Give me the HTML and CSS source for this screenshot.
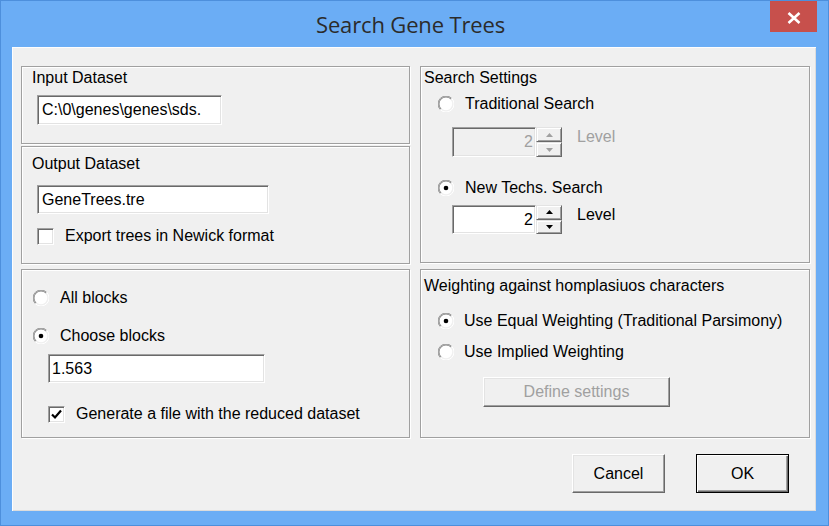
FILE: index.html
```html
<!DOCTYPE html>
<html>
<head>
<meta charset="utf-8">
<title>Search Gene Trees</title>
<link rel="stylesheet" href="styles.css">
</head>
<body>
<div class="window">
  <div class="titlebar">
    <span class="title">Search Gene Trees</span>
    <div class="close"><svg width="14" height="12" viewBox="0 0 14 12"><path d="M1.5 1 L12.5 11 M12.5 1 L1.5 11" stroke="#fff" stroke-width="2.6" fill="none"/></svg></div>
  </div>
  <div class="client">
    <div class="groups">
      <div class="col">
        <div class="group g-input">
          <div class="gtitle">Input Dataset</div>
          <div class="field f-input">C:\0\genes\genes\sds.</div>
        </div>
        <div class="group g-output">
          <div class="gtitle">Output Dataset</div>
          <div class="field f-output">GeneTrees.tre</div>
          <div class="check-row cr-export">
            <span class="checkbox"></span>
            <span class="label">Export trees in Newick format</span>
          </div>
        </div>
        <div class="group g-blocks">
          <div class="radio-row rr-all">
            <svg class="radio" width="16" height="16" viewBox="0 0 16 16"><path d="M2.3 13.7 A7.5 7.5 0 0 1 13.7 2.3" stroke="#a0a0a0" fill="none"/><path d="M13.7 2.3 A7.5 7.5 0 0 1 2.3 13.7" stroke="#fff" fill="none"/><circle cx="8" cy="8" r="6.2" fill="#fff"/><path d="M3 13 A6.5 6.5 0 0 1 13 3" stroke="#696969" stroke-width="0.8" fill="none"/></svg>
            <span class="label">All blocks</span>
          </div>
          <div class="radio-row rr-choose">
            <svg class="radio" width="16" height="16" viewBox="0 0 16 16"><path d="M2.3 13.7 A7.5 7.5 0 0 1 13.7 2.3" stroke="#a0a0a0" fill="none"/><path d="M13.7 2.3 A7.5 7.5 0 0 1 2.3 13.7" stroke="#fff" fill="none"/><circle cx="8" cy="8" r="6.2" fill="#fff"/><path d="M3 13 A6.5 6.5 0 0 1 13 3" stroke="#696969" stroke-width="0.8" fill="none"/><circle cx="8" cy="8" r="2.3" fill="#000"/></svg>
            <span class="label">Choose blocks</span>
          </div>
          <div class="field f-blocks">1.563</div>
          <div class="check-row cr-generate">
            <span class="checkbox"><svg width="13" height="13" viewBox="0 0 13 13"><path d="M2 6.5 L5 9.5 L11 2.5" stroke="#000" stroke-width="2.2" fill="none"/></svg></span>
            <span class="label">Generate a file with the reduced dataset</span>
          </div>
        </div>
      </div>
      <div class="col">
        <div class="group g-search">
          <div class="gtitle">Search Settings</div>
          <div class="radio-row rr-trad">
            <svg class="radio" width="16" height="16" viewBox="0 0 16 16"><path d="M2.3 13.7 A7.5 7.5 0 0 1 13.7 2.3" stroke="#a0a0a0" fill="none"/><path d="M13.7 2.3 A7.5 7.5 0 0 1 2.3 13.7" stroke="#fff" fill="none"/><circle cx="8" cy="8" r="6.2" fill="#fff"/><path d="M3 13 A6.5 6.5 0 0 1 13 3" stroke="#696969" stroke-width="0.8" fill="none"/></svg>
            <span class="label">Traditional Search</span>
          </div>
          <div class="spin-row sr-trad disabled">
            <div class="field spin-field">2</div>
            <div class="spin">
              <div class="spin-btn"><svg width="7" height="4" viewBox="0 0 7 4"><path d="M3.5 0 L7 4 L0 4 Z" fill="#a0a0a0"/></svg></div>
              <div class="spin-btn"><svg width="7" height="4" viewBox="0 0 7 4"><path d="M0 0 L7 0 L3.5 4 Z" fill="#a0a0a0"/></svg></div>
            </div>
            <span class="level">Level</span>
          </div>
          <div class="radio-row rr-new">
            <svg class="radio" width="16" height="16" viewBox="0 0 16 16"><path d="M2.3 13.7 A7.5 7.5 0 0 1 13.7 2.3" stroke="#a0a0a0" fill="none"/><path d="M13.7 2.3 A7.5 7.5 0 0 1 2.3 13.7" stroke="#fff" fill="none"/><circle cx="8" cy="8" r="6.2" fill="#fff"/><path d="M3 13 A6.5 6.5 0 0 1 13 3" stroke="#696969" stroke-width="0.8" fill="none"/><circle cx="8" cy="8" r="2.3" fill="#000"/></svg>
            <span class="label">New Techs. Search</span>
          </div>
          <div class="spin-row sr-new">
            <div class="field spin-field">2</div>
            <div class="spin">
              <div class="spin-btn"><svg width="7" height="4" viewBox="0 0 7 4"><path d="M3.5 0 L7 4 L0 4 Z" fill="#000"/></svg></div>
              <div class="spin-btn"><svg width="7" height="4" viewBox="0 0 7 4"><path d="M0 0 L7 0 L3.5 4 Z" fill="#000"/></svg></div>
            </div>
            <span class="level">Level</span>
          </div>
        </div>
        <div class="group g-weight">
          <div class="gtitle">Weighting against homplasiuos characters</div>
          <div class="radio-row rr-equal">
            <svg class="radio" width="16" height="16" viewBox="0 0 16 16"><path d="M2.3 13.7 A7.5 7.5 0 0 1 13.7 2.3" stroke="#a0a0a0" fill="none"/><path d="M13.7 2.3 A7.5 7.5 0 0 1 2.3 13.7" stroke="#fff" fill="none"/><circle cx="8" cy="8" r="6.2" fill="#fff"/><path d="M3 13 A6.5 6.5 0 0 1 13 3" stroke="#696969" stroke-width="0.8" fill="none"/><circle cx="8" cy="8" r="2.3" fill="#000"/></svg>
            <span class="label">Use Equal Weighting (Traditional Parsimony)</span>
          </div>
          <div class="radio-row rr-implied">
            <svg class="radio" width="16" height="16" viewBox="0 0 16 16"><path d="M2.3 13.7 A7.5 7.5 0 0 1 13.7 2.3" stroke="#a0a0a0" fill="none"/><path d="M13.7 2.3 A7.5 7.5 0 0 1 2.3 13.7" stroke="#fff" fill="none"/><circle cx="8" cy="8" r="6.2" fill="#fff"/><path d="M3 13 A6.5 6.5 0 0 1 13 3" stroke="#696969" stroke-width="0.8" fill="none"/></svg>
            <span class="label">Use Implied Weighting</span>
          </div>
          <div class="button btn-define">Define settings</div>
        </div>
      </div>
    </div>
    <div class="buttons">
      <div class="button btn-dialog">Cancel</div>
      <div class="button btn-dialog btn-default">OK</div>
    </div>
  </div>
</div>
</body>
</html>
```
FILE: styles.css
```css
* { box-sizing: border-box; }
html, body { margin: 0; padding: 0; }
body {
  width: 829px;
  height: 526px;
  overflow: hidden;
  font-family: "Liberation Sans", Arial, sans-serif;
  font-size: 16px;
  color: #000;
}
.window {
  width: 829px;
  height: 526px;
  background: #6badf5;
  border: 1px solid #4d8fdc;
  display: flex;
  flex-direction: column;
}
.titlebar {
  position: relative;
  height: 46px;
  flex: none;
  display: flex;
  align-items: center;
  justify-content: center;
}
.title {
  font-family: "Open Sans", "Noto Sans", sans-serif;
  font-size: 22px;
  color: #2b2b2b;
  letter-spacing: -0.15px;
  margin-left: -8px;
}
.close {
  position: absolute;
  top: 0;
  right: 11px;
  width: 47px;
  height: 31px;
  background: #c7504c;
  display: flex;
  align-items: center;
  justify-content: center;
  padding-top: 2px;
}
.client {
  margin-left: 11px;
  width: 804px;
  height: 464px;
  background: #f0f0f0;
  box-shadow: inset 1px 1px #fdfdfd, inset -1px -1px #dcdcdc;
  padding: 19px 8px 0 9px;
}
.groups {
  display: grid;
  grid-template-columns: 389px 390px;
  column-gap: 10px;
}
.col { display: flex; flex-direction: column; }
.group {
  border: 1px solid #a0a0a0;
  box-shadow: inset 1px 1px #fff, 1px 1px #fff;
  line-height: 18px;
}
.gtitle { line-height: 18px; white-space: nowrap; }
.label { white-space: nowrap; line-height: 18px; }

.g-input { height: 78px; padding: 2px 0 0 10px; }
.g-output { height: 118px; margin-top: 2px; padding: 8px 0 0 10px; }
.g-blocks { height: 169px; margin-top: 5px; padding: 19px 0 0 11px; }
.g-search { height: 197px; padding: 2px 0 0 3px; }
.g-weight { height: 169px; margin-top: 6px; padding: 7px 0 0 3px; }

.field {
  background: #fff;
  border-top: 1px solid #a0a0a0;
  border-left: 1px solid #a0a0a0;
  border-bottom: 1px solid #fff;
  border-right: 1px solid #fff;
  box-shadow: inset 1px 1px #696969, inset -1px -1px #e3e3e3;
  display: flex;
  align-items: center;
  padding: 0 3px 0 4px;
  white-space: nowrap;
  overflow: hidden;
}
.f-input { width: 185px; height: 30px; margin: 8px 0 0 5px; }
.f-output { width: 232px; height: 29px; margin: 12px 0 0 5px; }
.f-blocks { width: 217px; height: 29px; margin: 9px 0 0 15px; padding-left: 3px; }

.checkbox {
  width: 17px;
  height: 17px;
  flex: none;
  background: #fff;
  border-top: 1px solid #a0a0a0;
  border-left: 1px solid #a0a0a0;
  border-bottom: 1px solid #fff;
  border-right: 1px solid #fff;
  box-shadow: inset 1px 1px #696969, inset -1px -1px #e3e3e3;
  display: flex;
  align-items: center;
  justify-content: center;
}
.check-row { display: flex; align-items: center; }
.cr-export { margin: 13px 0 0 5px; gap: 11px; }
.cr-generate { margin: 22px 0 0 15px; gap: 11px; }

.radio-row { display: flex; align-items: center; gap: 11px; }
.radio { flex: none; }
.rr-choose { margin-top: 20px; }
.rr-trad { margin: 8px 0 0 14px; }
.rr-new { margin: 22px 0 0 14px; }
.rr-equal { margin: 17px 0 0 14px; gap: 10px; }
.rr-implied { margin: 13px 0 0 14px; gap: 10px; }

.spin-row { display: flex; align-items: flex-start; margin-left: 28px; }
.sr-trad { margin-top: 14px; }
.sr-new { margin-top: 8px; }
.spin-field { width: 84px; height: 30px; justify-content: flex-end; padding-right: 2px; }
.sr-new .spin-field { height: 29px; }
.disabled .spin-field { background: #f0f0f0; color: #a0a0a0; }
.spin { width: 26px; display: flex; flex-direction: column; }
.sr-trad .spin { height: 30px; }
.sr-new .spin { height: 29px; }
.spin-btn {
  flex: 1;
  background: #f0f0f0;
  border-top: 1px solid #e3e3e3;
  border-left: 1px solid #e3e3e3;
  border-bottom: 1px solid #696969;
  border-right: 1px solid #696969;
  box-shadow: inset 1px 1px #fff, inset -1px -1px #a0a0a0;
  display: flex;
  align-items: center;
  justify-content: center;
}
.level { margin: 1px 0 0 15px; line-height: 18px; }
.disabled .level { color: #a0a0a0; }

.button {
  background: #f0f0f0;
  border-top: 1px solid #fff;
  border-left: 1px solid #fff;
  border-bottom: 1px solid #696969;
  border-right: 1px solid #696969;
  box-shadow: inset -1px -1px #a0a0a0, inset 1px 1px #e3e3e3;
  display: flex;
  align-items: center;
  justify-content: center;
  white-space: nowrap;
}
.btn-define { width: 187px; height: 30px; margin: 16px 0 0 59px; color: #a0a0a0; }
.buttons {
  display: flex;
  justify-content: flex-end;
  gap: 31px;
  margin-top: 16px;
  padding-right: 19px;
}
.btn-dialog { width: 93px; height: 39px; }
.btn-default {
  border: 1px solid #000;
  box-shadow: inset 1px 1px #fff, inset -1px -1px #696969, inset -2px -2px #a0a0a0;
}
```
